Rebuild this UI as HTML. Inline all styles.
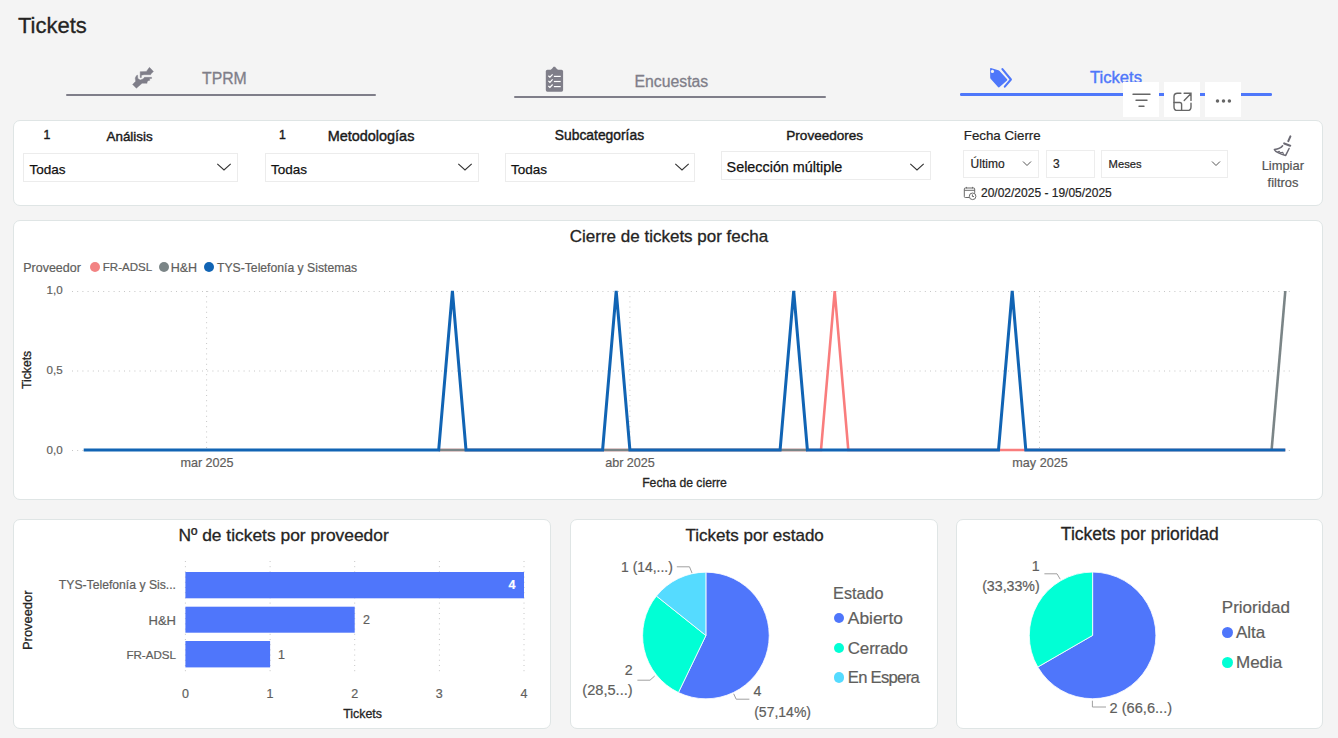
<!DOCTYPE html>
<html><head><meta charset="utf-8"><style>
html,body{margin:0;padding:0;}
body{width:1338px;height:738px;overflow:hidden;background:#f4f4f4;position:relative;font-family:"Liberation Sans", sans-serif;}
.t{position:absolute;line-height:1;white-space:nowrap;-webkit-text-stroke:0.2px currentColor;}
</style></head><body>
<div class="t" style="left:18.00px;top:15.17px;font-size:22px;color:#252423;font-weight:normal;-webkit-text-stroke:0.3px currentColor;">Tickets</div>
<div style="position:absolute;left:66px;top:94px;width:310px;height:2.2px;background:#7f7e89;border-radius:1px"></div>
<div style="position:absolute;left:514.3px;top:96.1px;width:312px;height:2.4px;background:#7f7e89;border-radius:1px"></div>
<div style="position:absolute;left:960px;top:93.4px;width:312px;height:2.3px;background:#4e77fa;border-radius:1.2px"></div>
<div class="t" style="left:202.00px;top:70.62px;font-size:15.8px;color:#7f7e89;font-weight:normal;-webkit-text-stroke:0.3px currentColor;">TPRM</div>
<div class="t" style="left:634.50px;top:73.62px;font-size:15.8px;color:#7f7e89;font-weight:normal;-webkit-text-stroke:0.3px currentColor;">Encuestas</div>
<div class="t" style="left:1090.00px;top:69.94px;font-size:16.6px;color:#4e77fa;font-weight:normal;-webkit-text-stroke:0.4px currentColor;">Tickets</div>
<svg style="position:absolute;left:125px;top:60px" width="40" height="35" viewBox="0 0 40 35">
<g fill="#7f7e89" stroke="#7f7e89" stroke-width="0.4" stroke-linejoin="round">
<path d="M15.19,11.63 L21.36,11.39 L24.44,7.36 L28.48,11.39 L25.63,14.24 L25.87,14.71 L18.98,14.71 L16.37,15.19 L16.37,17.56 L15.19,17.56 Z"/>
<path d="M7.59,24.44 L10.68,21.36 L10.2,18.03 L11.39,15.66 L12.58,15.09 L12.81,18.51 L15.19,19.93 L18.03,18.98 L19.46,17.32 L26.58,17.32 L26.58,18.51 L24.68,18.51 L24.68,20.41 L23.73,20.41 L22.07,21.83 L22.07,23.26 L17.09,23.26 L11.39,28.24 Z"/>
</g></svg>
<svg style="position:absolute;left:538px;top:60px" width="34" height="36" viewBox="0 0 34 36">
<rect x="7.8" y="9.8" width="17.3" height="21.9" rx="1.6" fill="#7f7e89"/>
<path d="M12.7,10 L14.6,8 L15.5,6.8 L17.1,6.8 L18,8 L20,10 Z" fill="#7f7e89"/>
<g stroke="#fff" stroke-width="1.2" fill="none">
<path d="M10.4,15.8 L11.9,17.2 L14.6,14.3"/><path d="M15.9,16.4 H22.7"/>
<path d="M10.4,20.9 L11.9,22.3 L14.6,19.4"/><path d="M15.9,21.5 H22.7"/>
<path d="M10.4,26 L11.9,27.4 L14.6,24.5"/><path d="M15.9,26.6 H22.7"/>
</g></svg>
<svg style="position:absolute;left:982px;top:60px" width="38" height="35" viewBox="0 0 38 35">
<path d="M8.8,8.1 L16.4,10.2 Q17,10.4 17.6,11 L25.1,19.2 Q25.6,19.9 25,20.5 L17.3,27.2 Q16.6,27.8 16,27.1 L8.6,18.7 Q8.2,18.2 8.2,17.6 L8.1,8.9 Q8.1,8 8.8,8.1 Z" fill="#4e77fa"/>
<circle cx="10.45" cy="11.4" r="1.6" fill="#f4f4f4"/>
<path d="M20.4,9.1 L28.9,19.5 L22.8,26.6" stroke="#4e77fa" stroke-width="2.1" fill="none" stroke-linecap="round" stroke-linejoin="round"/>
</svg>
<div style="position:absolute;left:1123px;top:82px;width:36px;height:35px;background:#fff"></div>
<div style="position:absolute;left:1164px;top:82px;width:36px;height:35px;background:#fff"></div>
<div style="position:absolute;left:1205px;top:82px;width:36px;height:35px;background:#fff"></div>
<svg style="position:absolute;left:1123px;top:82px" width="118" height="35" viewBox="0 0 118 35">
<g stroke="#666" stroke-width="1.4" fill="none" stroke-linecap="round">
<path d="M10 12.3 H27"/><path d="M13 18.3 H24"/><path d="M16 24.3 H21"/>
<path d="M57.9 11.3 H54.5 Q51 11.3 51 14.8 V24.9 Q51 28.4 54.5 28.4 H64.5 Q68 28.4 68 24.9 V21.3"/>
<path d="M51 20.5 H56.8 Q58.6 20.5 58.6 22.3 V28.4"/>
<path d="M61.2 18.4 L67.5 12 M61.1 11.3 H68 V18.4"/>
</g>
<g fill="#666"><circle cx="94.5" cy="19" r="1.75"/><circle cx="100.5" cy="19" r="1.75"/><circle cx="106.4" cy="19" r="1.75"/></g>
</svg>
<div style="position:absolute;left:13px;top:120px;width:1310px;height:86px;background:#fff;border:1px solid #dfe5e5;border-radius:7px;box-sizing:border-box;"></div>
<div class="t" style="left:43.50px;top:129.39px;font-size:12.3px;color:#1a1a1a;font-weight:normal;-webkit-text-stroke:0.4px currentColor;">1</div>
<div class="t" style="left:106.50px;top:129.85px;font-size:13.4px;color:#1a1a1a;font-weight:normal;-webkit-text-stroke:0.4px currentColor;">Análisis</div>
<div class="t" style="left:279.00px;top:129.39px;font-size:12.3px;color:#1a1a1a;font-weight:normal;-webkit-text-stroke:0.4px currentColor;">1</div>
<div class="t" style="left:327.70px;top:128.97px;font-size:14.45px;color:#1a1a1a;font-weight:normal;-webkit-text-stroke:0.4px currentColor;">Metodologías</div>
<div class="t" style="left:554.80px;top:129.47px;font-size:13.85px;color:#1a1a1a;font-weight:normal;-webkit-text-stroke:0.4px currentColor;">Subcategorías</div>
<div class="t" style="left:786.30px;top:128.62px;font-size:13.56px;color:#1a1a1a;font-weight:normal;-webkit-text-stroke:0.4px currentColor;">Proveedores</div>
<div style="position:absolute;left:23px;top:153px;width:215px;height:29px;border:1px solid #ececec;box-sizing:border-box;background:#fff;"></div>
<div class="t" style="left:29.40px;top:162.77px;font-size:13.5px;color:#111;font-weight:normal;-webkit-text-stroke:0.25px currentColor;">Todas</div>
<svg style="position:absolute;left:216px;top:162.2px" width="16" height="10" viewBox="0 0 16 10"><path d="M1.3 1.8 L8 8 L14.7 1.8" stroke="#333" stroke-width="1.1" fill="none"/></svg>
<div style="position:absolute;left:265px;top:153px;width:214px;height:29px;border:1px solid #ececec;box-sizing:border-box;background:#fff;"></div>
<div class="t" style="left:271.10px;top:162.77px;font-size:13.5px;color:#111;font-weight:normal;-webkit-text-stroke:0.25px currentColor;">Todas</div>
<svg style="position:absolute;left:457px;top:162.2px" width="16" height="10" viewBox="0 0 16 10"><path d="M1.3 1.8 L8 8 L14.7 1.8" stroke="#333" stroke-width="1.1" fill="none"/></svg>
<div style="position:absolute;left:505px;top:153px;width:190px;height:29px;border:1px solid #ececec;box-sizing:border-box;background:#fff;"></div>
<div class="t" style="left:511.10px;top:162.77px;font-size:13.5px;color:#111;font-weight:normal;-webkit-text-stroke:0.25px currentColor;">Todas</div>
<svg style="position:absolute;left:674px;top:162.2px" width="16" height="10" viewBox="0 0 16 10"><path d="M1.3 1.8 L8 8 L14.7 1.8" stroke="#333" stroke-width="1.1" fill="none"/></svg>
<div style="position:absolute;left:721px;top:151px;width:210px;height:29px;border:1px solid #ececec;box-sizing:border-box;background:#fff;"></div>
<div class="t" style="left:726.60px;top:160.44px;font-size:14.36px;color:#111;font-weight:normal;-webkit-text-stroke:0.25px currentColor;">Selección múltiple</div>
<svg style="position:absolute;left:909px;top:161.6px" width="16" height="10" viewBox="0 0 16 10"><path d="M1.3 1.8 L8 8 L14.7 1.8" stroke="#333" stroke-width="1.1" fill="none"/></svg>
<div class="t" style="left:963.80px;top:129.04px;font-size:13.3px;color:#252423;font-weight:normal;">Fecha Cierre</div>
<div style="position:absolute;left:963px;top:150px;width:76px;height:28px;border:1px solid #ededed;box-sizing:border-box;background:#fff;"></div>
<div style="position:absolute;left:1046px;top:150px;width:49px;height:28px;border:1px solid #ededed;box-sizing:border-box;background:#fff;"></div>
<div style="position:absolute;left:1101px;top:150px;width:127px;height:28px;border:1px solid #ededed;box-sizing:border-box;background:#fff;"></div>
<div class="t" style="left:970.60px;top:157.84px;font-size:12.0px;color:#252423;font-weight:normal;">Último</div>
<div class="t" style="left:1053.00px;top:157.84px;font-size:12.0px;color:#252423;font-weight:normal;">3</div>
<div class="t" style="left:1108.60px;top:158.52px;font-size:11.2px;color:#252423;font-weight:normal;">Meses</div>
<svg style="position:absolute;left:1022px;top:160px" width="10" height="7" viewBox="0 0 10 7"><path d="M1 1.5 L5 5.5 L9 1.5" stroke="#555" stroke-width="1" fill="none"/></svg>
<svg style="position:absolute;left:1211px;top:160px" width="10" height="7" viewBox="0 0 10 7"><path d="M1 1.5 L5 5.5 L9 1.5" stroke="#555" stroke-width="1" fill="none"/></svg>
<svg style="position:absolute;left:963px;top:186px" width="15" height="15" viewBox="0 0 15 15">
<g stroke="#6a6a6a" stroke-width="1" fill="none">
<path d="M6.2 11.5 H2.3 Q1.3 11.5 1.3 10.5 V3 Q1.3 2 2.3 2 H10.7 Q11.7 2 11.7 3 V6.9"/>
<path d="M1.3 4.3 H11.7"/><path d="M3.4 0.9 V2.4 M9.6 0.9 V2.4"/>
<circle cx="9.6" cy="10.3" r="3.3"/><path d="M9.4 8.4 V10.5 H11"/>
</g></svg>
<div class="t" style="left:981.00px;top:186.74px;font-size:12.0px;color:#252423;font-weight:normal;">20/02/2025 - 19/05/2025</div>
<svg style="position:absolute;left:1266px;top:130px" width="32" height="30" viewBox="0 0 32 30">
<g stroke="#6b6a74" fill="none" stroke-linecap="round" stroke-linejoin="round">
<path d="M24.4,6.3 L22.3,11.2" stroke-width="2"/>
<path d="M18.2,13.4 L24.2,15.7" stroke-width="2.1"/>
<path d="M16.6,15.8 Q14.6,18.6 8.4,19.6 Q9.5,21.6 12,22.6 Q16,24.6 19.7,25.4 L23.1,18.5" stroke-width="1.5"/>
<path d="M11.8,22 L13.2,21.3 L14.2,22.8 L16.8,22.3 L17.5,24.5" stroke-width="1.1"/>
</g></svg>
<div class="t" style="left:1082.80px;width:400px;text-align:center;top:160.08px;font-size:12.9px;color:#555;font-weight:normal;">Limpiar</div>
<div class="t" style="left:1083.00px;width:400px;text-align:center;top:176.78px;font-size:12.9px;color:#555;font-weight:normal;">filtros</div>
<div style="position:absolute;left:13px;top:220px;width:1310px;height:280px;background:#fff;border:1px solid #dfe5e5;border-radius:7px;box-sizing:border-box;"></div>
<div class="t" style="left:469.00px;width:400px;text-align:center;top:228.41px;font-size:17.0px;color:#252423;font-weight:normal;-webkit-text-stroke:0.3px currentColor;">Cierre de tickets por fecha</div>
<div class="t" style="left:23.20px;top:261.62px;font-size:12.5px;color:#605e5c;font-weight:normal;">Proveedor</div>
<div style="position:absolute;left:89.6px;top:262px;width:10px;height:10px;border-radius:50%;background:#f28383"></div>
<div class="t" style="left:102.80px;top:262.42px;font-size:11.55px;color:#605e5c;font-weight:normal;">FR-ADSL</div>
<div style="position:absolute;left:158.8px;top:262px;width:10px;height:10px;border-radius:50%;background:#7b8587"></div>
<div class="t" style="left:170.70px;top:261.62px;font-size:12.5px;color:#605e5c;font-weight:normal;">H&amp;H</div>
<div style="position:absolute;left:204.3px;top:262px;width:10px;height:10px;border-radius:50%;background:#1164b4"></div>
<div class="t" style="left:217.00px;top:261.87px;font-size:12.2px;color:#605e5c;font-weight:normal;">TYS-Telefonía y Sistemas</div>
<div class="t" style="right:1275.40px;text-align:right;top:284.18px;font-size:11.6px;color:#605e5c;font-weight:normal;">1,0</div>
<div class="t" style="right:1275.40px;text-align:right;top:364.18px;font-size:11.6px;color:#605e5c;font-weight:normal;">0,5</div>
<div class="t" style="right:1275.40px;text-align:right;top:443.68px;font-size:11.6px;color:#605e5c;font-weight:normal;">0,0</div>
<div class="t" style="left:21px;top:389px;font-size:12.2px;color:#252423;transform-origin:0 0;transform:rotate(-90deg);-webkit-text-stroke:0.3px currentColor">Tickets</div>
<div class="t" style="left:7.00px;width:400px;text-align:center;top:456.73px;font-size:12.6px;color:#605e5c;font-weight:normal;">mar 2025</div>
<div class="t" style="left:430.00px;width:400px;text-align:center;top:456.73px;font-size:12.6px;color:#605e5c;font-weight:normal;">abr 2025</div>
<div class="t" style="left:840.00px;width:400px;text-align:center;top:456.73px;font-size:12.6px;color:#605e5c;font-weight:normal;">may 2025</div>
<div class="t" style="left:484.50px;width:400px;text-align:center;top:476.97px;font-size:12.2px;color:#252423;font-weight:normal;-webkit-text-stroke:0.3px currentColor">Fecha de cierre</div>
<svg style="position:absolute;left:0;top:0" width="1338" height="738">
<line x1="72" y1="291.5" x2="1292" y2="291.5" stroke="#c6c6c6" stroke-width="1" stroke-dasharray="1 4.2"/>
<line x1="72" y1="371.0" x2="1292" y2="371.0" stroke="#c6c6c6" stroke-width="1" stroke-dasharray="1 4.2"/>
<line x1="72" y1="450.5" x2="1292" y2="450.5" stroke="#c6c6c6" stroke-width="1" stroke-dasharray="1 4.2"/>
<line x1="206.6" y1="291" x2="206.6" y2="450" stroke="#c6c6c6" stroke-width="1" stroke-dasharray="1 4.2"/>
<line x1="629.9" y1="291" x2="629.9" y2="450" stroke="#c6c6c6" stroke-width="1" stroke-dasharray="1 4.2"/>
<line x1="1039.5" y1="291" x2="1039.5" y2="450" stroke="#c6c6c6" stroke-width="1" stroke-dasharray="1 4.2"/>
<polyline points="438.7,450.0 452.4,450.0 466.0,450.0 479.7,450.0 493.3,450.0 507.0,450.0 520.6,450.0 534.3,450.0 548.0,450.0 561.6,450.0 575.3,450.0 588.9,450.0 602.6,450.0 616.2,450.0 629.9,450.0 643.5,450.0 657.2,450.0 670.8,450.0 684.5,450.0 698.1,450.0 711.8,450.0 725.5,450.0 739.1,450.0 752.8,450.0 766.4,450.0 780.1,450.0 793.7,450.0 807.4,450.0 821.0,450.0 834.7,291.0 848.3,450.0 862.0,450.0 875.6,450.0 889.3,450.0 903.0,450.0 916.6,450.0 930.3,450.0 943.9,450.0 957.6,450.0 971.2,450.0 984.9,450.0 998.5,450.0 1012.2,450.0 1025.8,450.0 1039.5,450.0 1053.1,450.0 1066.8,450.0 1080.5,450.0 1094.1,450.0 1107.8,450.0 1121.4,450.0 1135.1,450.0 1148.7,450.0 1162.4,450.0 1176.0,450.0 1189.7,450.0 1203.3,450.0 1217.0,450.0 1230.6,450.0 1244.3,450.0 1258.0,450.0 1271.6,450.0 1285.3,450.0" fill="none" stroke="#f97d7d" stroke-width="2.6" stroke-linejoin="miter"/>
<polyline points="438.7,450.0 452.4,450.0 466.0,450.0 479.7,450.0 493.3,450.0 507.0,450.0 520.6,450.0 534.3,450.0 548.0,450.0 561.6,450.0 575.3,450.0 588.9,450.0 602.6,450.0 616.2,450.0 629.9,450.0 643.5,450.0 657.2,450.0 670.8,450.0 684.5,450.0 698.1,450.0 711.8,450.0 725.5,450.0 739.1,450.0 752.8,450.0 766.4,450.0 780.1,450.0 793.7,450.0 807.4,450.0" fill="none" stroke="#7b8587" stroke-width="2.6"/>
<polyline points="1271.6,450.0 1285.3,291.0" fill="none" stroke="#7b8587" stroke-width="2.6"/>
<polyline points="83.7,450.0 97.4,450.0 111.0,450.0 124.7,450.0 138.3,450.0 152.0,450.0 165.6,450.0 179.3,450.0 192.9,450.0 206.6,450.0 220.3,450.0 233.9,450.0 247.6,450.0 261.2,450.0 274.9,450.0 288.5,450.0 302.2,450.0 315.8,450.0 329.5,450.0 343.1,450.0 356.8,450.0 370.4,450.0 384.1,450.0 397.8,450.0 411.4,450.0 425.1,450.0 438.7,450.0 452.4,291.0 466.0,450.0 479.7,450.0 493.3,450.0 507.0,450.0 520.6,450.0 534.3,450.0 548.0,450.0 561.6,450.0 575.3,450.0 588.9,450.0 602.6,450.0 616.2,291.0 629.9,450.0 643.5,450.0 657.2,450.0 670.8,450.0 684.5,450.0 698.1,450.0 711.8,450.0 725.5,450.0 739.1,450.0 752.8,450.0 766.4,450.0 780.1,450.0 793.7,291.0 807.4,450.0 821.0,450.0 834.7,450.0 848.3,450.0 862.0,450.0 875.6,450.0 889.3,450.0 903.0,450.0 916.6,450.0 930.3,450.0 943.9,450.0 957.6,450.0 971.2,450.0 984.9,450.0 998.5,450.0 1012.2,291.0 1025.8,450.0 1039.5,450.0 1053.1,450.0 1066.8,450.0 1080.5,450.0 1094.1,450.0 1107.8,450.0 1121.4,450.0 1135.1,450.0 1148.7,450.0 1162.4,450.0 1176.0,450.0 1189.7,450.0 1203.3,450.0 1217.0,450.0 1230.6,450.0 1244.3,450.0 1258.0,450.0 1271.6,450.0 1285.3,450.0" fill="none" stroke="#1164b4" stroke-width="3"/>
</svg>
<div style="position:absolute;left:13px;top:519px;width:538px;height:210px;background:#fff;border:1px solid #dfe5e5;border-radius:7px;box-sizing:border-box;"></div>
<div class="t" style="left:83.60px;width:400px;text-align:center;top:526.67px;font-size:17.4px;color:#252423;font-weight:normal;-webkit-text-stroke:0.3px currentColor;">Nº de tickets por proveedor</div>
<div class="t" style="left:22px;top:650px;font-size:12.9px;color:#252423;transform-origin:0 0;transform:rotate(-90deg);-webkit-text-stroke:0.3px currentColor">Proveedor</div>
<div class="t" style="right:1162.00px;text-align:right;top:579.17px;font-size:12.2px;color:#605e5c;font-weight:normal;">TYS-Telefonía y Sis...</div>
<div class="t" style="right:1162.00px;text-align:right;top:614.29px;font-size:13.0px;color:#605e5c;font-weight:normal;">H&amp;H</div>
<div class="t" style="right:1162.00px;text-align:right;top:649.18px;font-size:11.6px;color:#605e5c;font-weight:normal;">FR-ADSL</div>
<svg style="position:absolute;left:0;top:0" width="1338" height="738">
<line x1="185.4" y1="561" x2="185.4" y2="675" stroke="#c6c6c6" stroke-width="1" stroke-dasharray="1 4.2"/>
<line x1="270.1" y1="561" x2="270.1" y2="675" stroke="#c6c6c6" stroke-width="1" stroke-dasharray="1 4.2"/>
<line x1="354.7" y1="561" x2="354.7" y2="675" stroke="#c6c6c6" stroke-width="1" stroke-dasharray="1 4.2"/>
<line x1="439.4" y1="561" x2="439.4" y2="675" stroke="#c6c6c6" stroke-width="1" stroke-dasharray="1 4.2"/>
<line x1="524.0" y1="561" x2="524.0" y2="675" stroke="#c6c6c6" stroke-width="1" stroke-dasharray="1 4.2"/>
<rect x="185.4" y="572" width="338.6" height="26.3" fill="#4f76fb"/>
<rect x="185.4" y="606.7" width="169.3" height="26.0" fill="#4f76fb"/>
<rect x="185.4" y="641" width="84.7" height="26.4" fill="#4f76fb"/>
</svg>
<div class="t" style="left:312.00px;width:400px;text-align:center;top:579.42px;font-size:12.5px;color:#fff;font-weight:bold;">4</div>
<div class="t" style="left:166.50px;width:400px;text-align:center;top:613.92px;font-size:12.5px;color:#605e5c;font-weight:normal;">2</div>
<div class="t" style="left:81.50px;width:400px;text-align:center;top:648.92px;font-size:12.5px;color:#605e5c;font-weight:normal;">1</div>
<div class="t" style="left:-14.60px;width:400px;text-align:center;top:687.92px;font-size:12.5px;color:#605e5c;font-weight:normal;">0</div>
<div class="t" style="left:70.05px;width:400px;text-align:center;top:687.92px;font-size:12.5px;color:#605e5c;font-weight:normal;">1</div>
<div class="t" style="left:154.70px;width:400px;text-align:center;top:687.92px;font-size:12.5px;color:#605e5c;font-weight:normal;">2</div>
<div class="t" style="left:239.35px;width:400px;text-align:center;top:687.92px;font-size:12.5px;color:#605e5c;font-weight:normal;">3</div>
<div class="t" style="left:324.00px;width:400px;text-align:center;top:687.92px;font-size:12.5px;color:#605e5c;font-weight:normal;">4</div>
<div class="t" style="left:162.60px;width:400px;text-align:center;top:707.80px;font-size:12.4px;color:#252423;font-weight:normal;-webkit-text-stroke:0.3px currentColor">Tickets</div>
<div style="position:absolute;left:570px;top:519px;width:368px;height:210px;background:#fff;border:1px solid #dfe5e5;border-radius:7px;box-sizing:border-box;"></div>
<div style="position:absolute;left:956px;top:519px;width:367px;height:210px;background:#fff;border:1px solid #dfe5e5;border-radius:7px;box-sizing:border-box;"></div>
<div class="t" style="left:554.70px;width:400px;text-align:center;top:526.91px;font-size:17.0px;color:#252423;font-weight:normal;-webkit-text-stroke:0.3px currentColor;">Tickets por estado</div>
<svg style="position:absolute;left:0;top:0" width="1338" height="738">
<path d="M705.9,635.5 L705.90,572.20 A63.3,63.3 0 1 1 678.44,692.53 Z" fill="#4f76fb" stroke="#fff" stroke-width="0.8" stroke-linejoin="round"/>
<path d="M705.9,635.5 L678.44,692.53 A63.3,63.3 0 0 1 656.41,596.03 Z" fill="#01ffd5" stroke="#fff" stroke-width="0.8" stroke-linejoin="round"/>
<path d="M705.9,635.5 L656.41,596.03 A63.3,63.3 0 0 1 705.90,572.20 Z" fill="#55dbff" stroke="#fff" stroke-width="0.8" stroke-linejoin="round"/>
<path d="M1092.6,635.4 L1092.60,572.10 A63.3,63.3 0 1 1 1037.78,667.05 Z" fill="#4f76fb" stroke="#fff" stroke-width="0.8" stroke-linejoin="round"/>
<path d="M1092.6,635.4 L1037.78,667.05 A63.3,63.3 0 0 1 1092.60,572.10 Z" fill="#01ffd5" stroke="#fff" stroke-width="0.8" stroke-linejoin="round"/>
<polyline points="676.8,566.8 689.5,566.8 692,573" fill="none" stroke="#a0a0a0" stroke-width="1"/>
<polyline points="637.4,680.2 650,680.2 654.7,676" fill="none" stroke="#a0a0a0" stroke-width="1"/>
<polyline points="733.7,693.8 736.2,699.2 749.4,699.2" fill="none" stroke="#a0a0a0" stroke-width="1"/>
<polyline points="1044.4,573.8 1057,573.8 1060.2,579.2" fill="none" stroke="#a0a0a0" stroke-width="1"/>
<polyline points="1092.4,700.7 1092.4,707 1106,707" fill="none" stroke="#a0a0a0" stroke-width="1"/>
</svg>
<div class="t" style="right:665.20px;text-align:right;top:560.73px;font-size:13.9px;color:#605e5c;font-weight:normal;">1 (14,...)</div>
<div class="t" style="right:705.40px;text-align:right;top:663.48px;font-size:14.2px;color:#605e5c;font-weight:normal;">2</div>
<div class="t" style="right:705.40px;text-align:right;top:683.14px;font-size:14.6px;color:#605e5c;font-weight:normal;">(28,5...)</div>
<div class="t" style="left:753.60px;top:684.28px;font-size:14.2px;color:#605e5c;font-weight:normal;">4</div>
<div class="t" style="left:754.20px;top:704.95px;font-size:14.0px;color:#605e5c;font-weight:normal;">(57,14%)</div>
<div class="t" style="left:833.10px;top:585.28px;font-size:16.2px;color:#605e5c;font-weight:normal;">Estado</div>
<div style="position:absolute;left:834.0999999999999px;top:613.0px;width:10.4px;height:10.4px;border-radius:50%;background:#4f76fb"></div>
<div class="t" style="left:847.80px;top:609.77px;font-size:17.4px;color:#605e5c;font-weight:normal;letter-spacing:0px;">Abierto</div>
<div style="position:absolute;left:834.0999999999999px;top:642.5px;width:10.4px;height:10.4px;border-radius:50%;background:#01ffd5"></div>
<div class="t" style="left:847.80px;top:639.61px;font-size:17.0px;color:#605e5c;font-weight:normal;letter-spacing:-0.2px;">Cerrado</div>
<div style="position:absolute;left:834.0999999999999px;top:672.3px;width:10.4px;height:10.4px;border-radius:50%;background:#55dbff"></div>
<div class="t" style="left:847.80px;top:669.74px;font-size:16.6px;color:#605e5c;font-weight:normal;letter-spacing:-0.7px;">En Espera</div>
<div class="t" style="left:939.80px;width:400px;text-align:center;top:526.48px;font-size:17.5px;color:#252423;font-weight:normal;-webkit-text-stroke:0.3px currentColor;">Tickets por prioridad</div>
<div class="t" style="right:298.30px;text-align:right;top:558.78px;font-size:14.2px;color:#605e5c;font-weight:normal;">1</div>
<div class="t" style="right:298.30px;text-align:right;top:579.28px;font-size:14.2px;color:#605e5c;font-weight:normal;">(33,33%)</div>
<div class="t" style="left:1109.60px;top:701.14px;font-size:14.6px;color:#605e5c;font-weight:normal;">2 (66,6...)</div>
<div class="t" style="left:1221.80px;top:599.11px;font-size:17.0px;color:#605e5c;font-weight:normal;">Prioridad</div>
<div style="position:absolute;left:1222.0px;top:627.3px;width:11px;height:11px;border-radius:50%;background:#4f76fb"></div>
<div class="t" style="left:1236.00px;top:624.41px;font-size:17.0px;color:#605e5c;font-weight:normal;">Alta</div>
<div style="position:absolute;left:1222.0px;top:656.7px;width:11px;height:11px;border-radius:50%;background:#01ffd5"></div>
<div class="t" style="left:1236.00px;top:653.81px;font-size:17.0px;color:#605e5c;font-weight:normal;">Media</div>
</body></html>
